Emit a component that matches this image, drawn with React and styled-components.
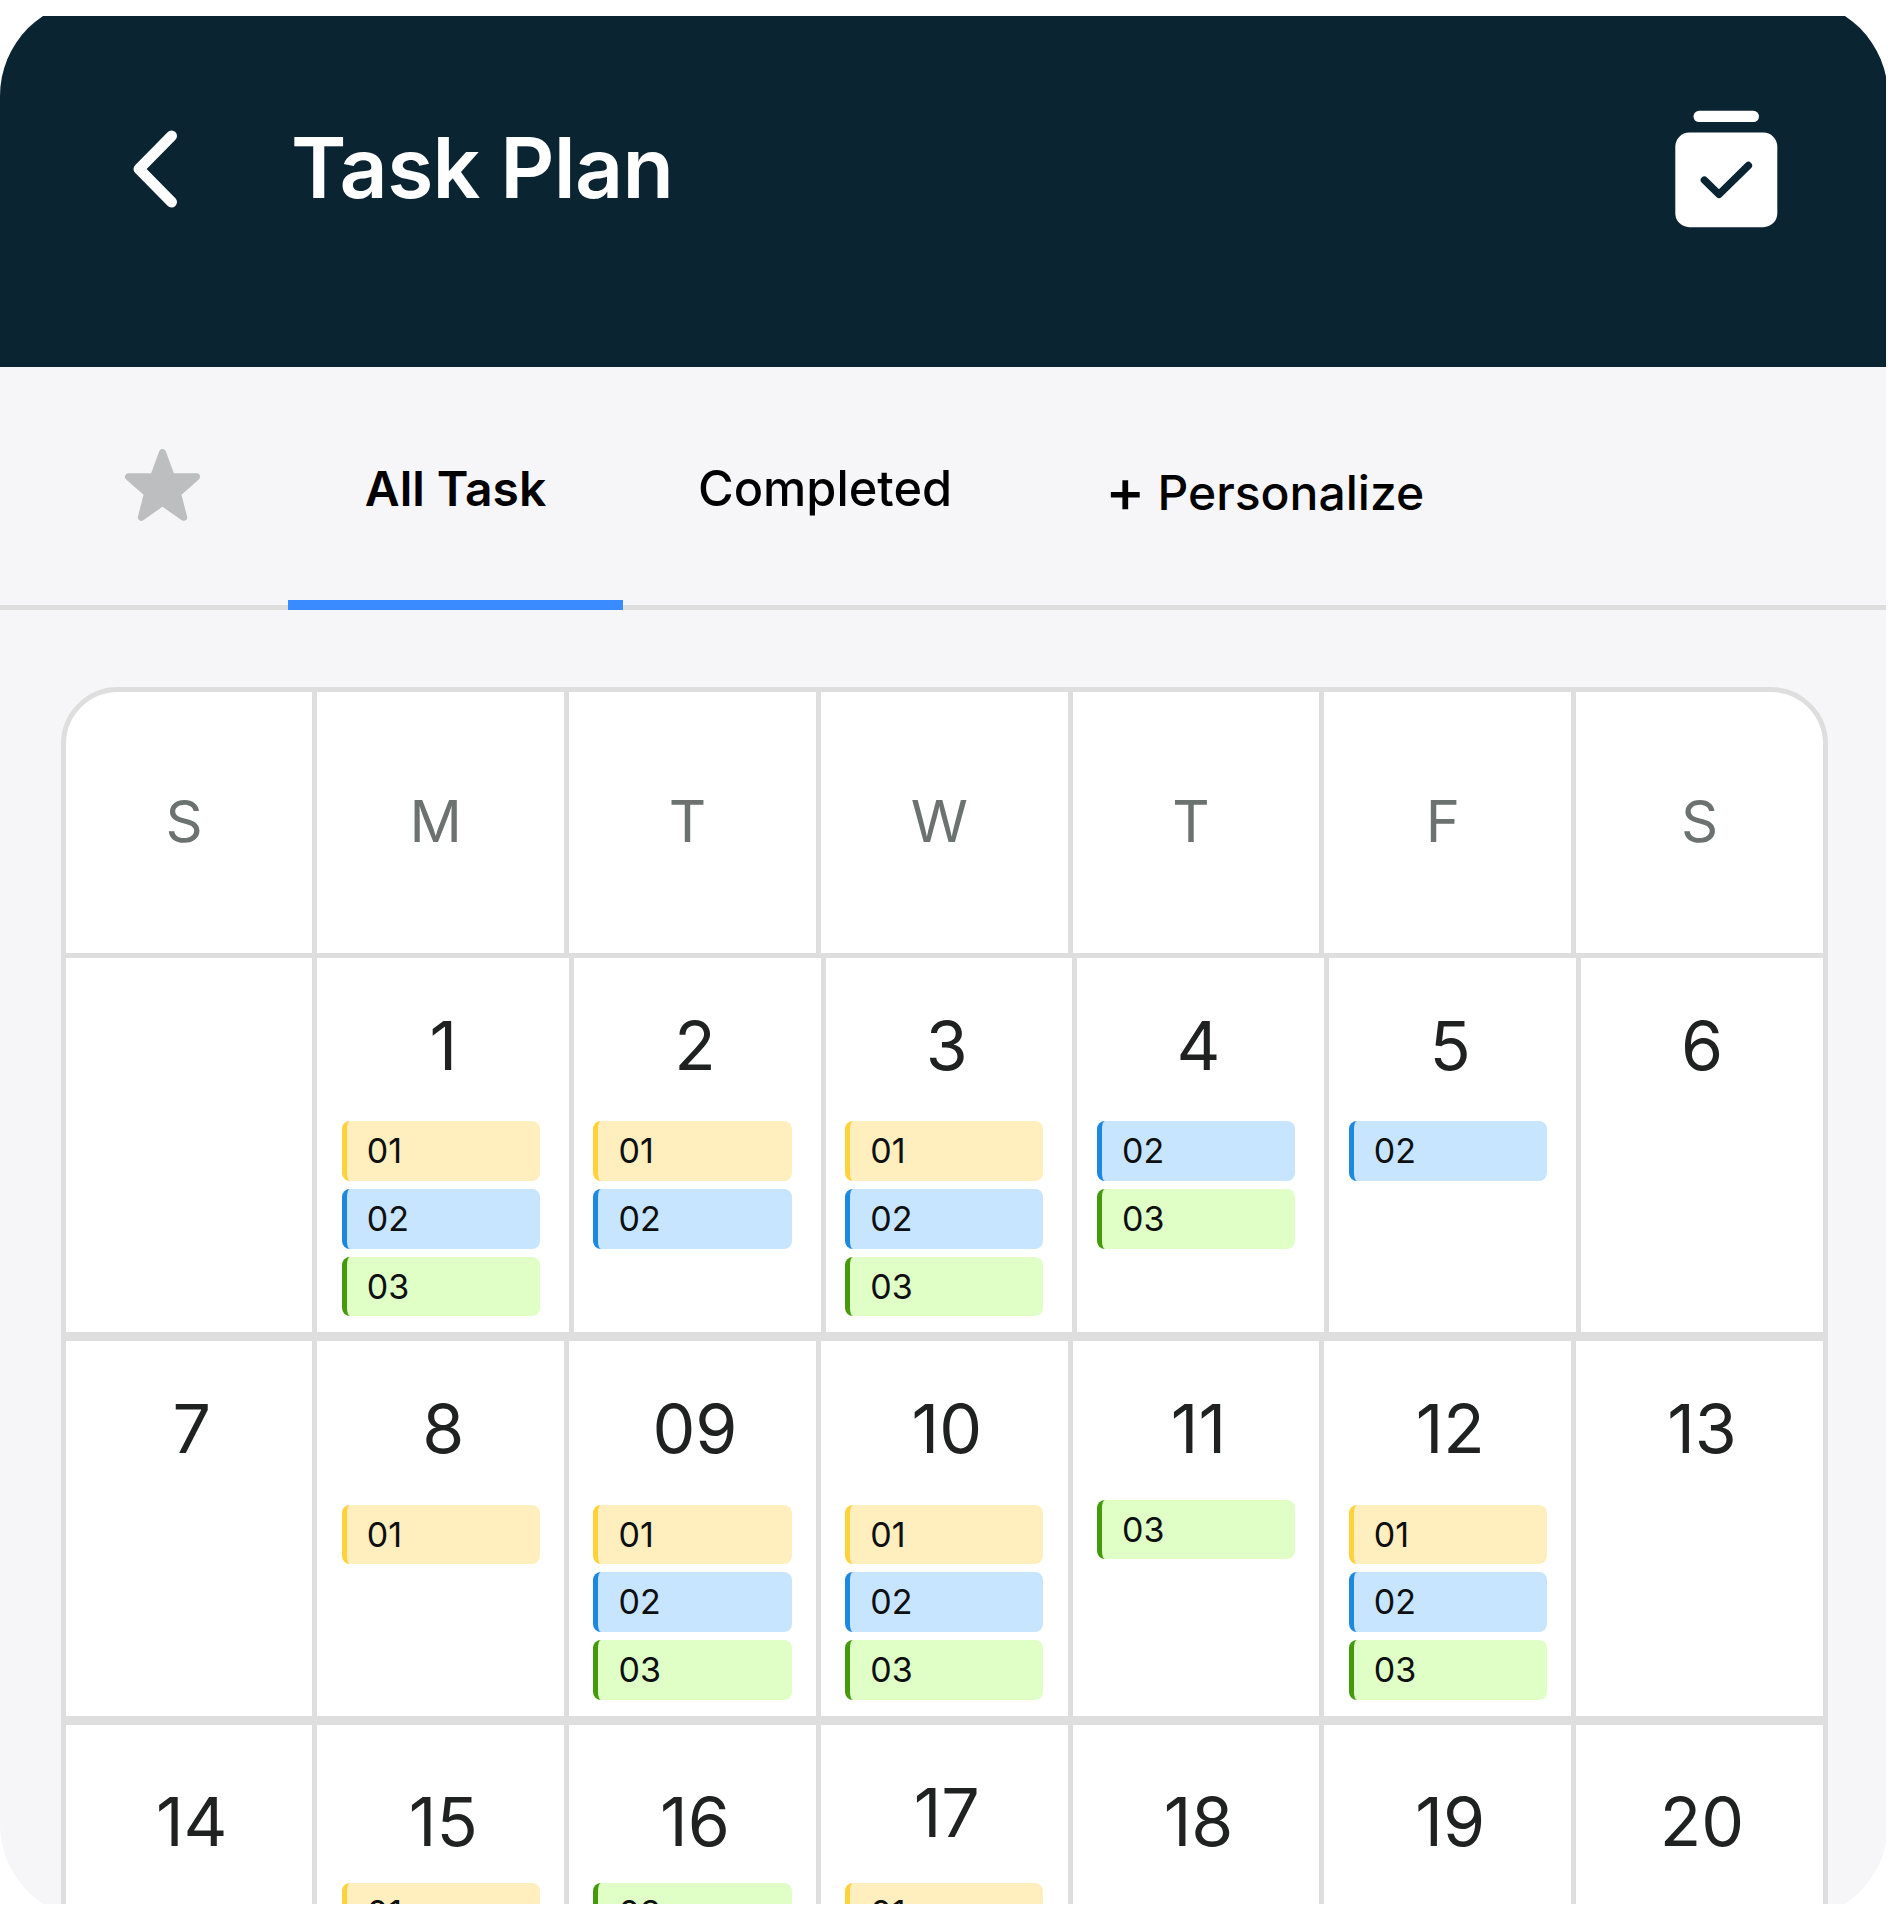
import React from "react";
import styled, { createGlobalStyle } from "styled-components";

const weekDays = ["S", "M", "T", "W", "T", "F", "S"];

const weeks = [
  {
    shiftLines: true,
    days: [
      { label: "", tasks: [] },
      { label: "1", tasks: ["01", "02", "03"] },
      { label: "2", tasks: ["01", "02"] },
      { label: "3", tasks: ["01", "02", "03"] },
      { label: "4", tasks: ["02", "03"] },
      { label: "5", tasks: ["02"] },
      { label: "6", tasks: [] },
    ],
  },
  {
    days: [
      { label: "7", tasks: [] },
      { label: "8", tasks: ["01"] },
      { label: "09", tasks: ["01", "02", "03"] },
      { label: "10", tasks: ["01", "02", "03"] },
      { label: "11", tasks: ["03"], raised: true },
      { label: "12", tasks: ["01", "02", "03"] },
      { label: "13", tasks: [] },
    ],
  },
  {
    days: [
      { label: "14", tasks: [], low: true },
      { label: "15", tasks: ["01"], low: true, raised: true },
      { label: "16", tasks: ["03"], low: true, raised: true },
      { label: "17", tasks: ["01"], raised: true },
      { label: "18", tasks: [], low: true },
      { label: "19", tasks: [], low: true },
      { label: "20", tasks: [], low: true },
    ],
  },
];

const taskColors = {
  "01": { background: "#ffeebe", accent: "#ffd13b" },
  "02": { background: "#c8e5ff", accent: "#1c88e0" },
  "03": { background: "#dfffc6", accent: "#449a0c" },
};

const BackIcon = () => (
  <svg width="46" height="80" viewBox="0 0 46 80" fill="none">
    <path
      d="M39.5 7L7 40L39.5 73"
      stroke="#fff"
      strokeWidth="11"
      strokeLinecap="round"
      strokeLinejoin="round"
    />
  </svg>
);

const TaskIcon = () => (
  <svg width="103" height="118" viewBox="0 0 103 118" fill="none">
    <rect x="18.5" y="0.8" width="65.5" height="11.3" rx="5.6" fill="#fff" />
    <rect x="0.3" y="22.6" width="102" height="94.6" rx="14" fill="#fff" />
    <path
      d="M29.4 70.2L44 84.4L73.4 55.5"
      stroke="#0b2432"
      strokeWidth="7.4"
      strokeLinecap="round"
      strokeLinejoin="round"
    />
  </svg>
);

const StarIcon = () => (
  <svg width="77" height="74" viewBox="0 0 77 74">
    <path
      d="M38.5 4.5L47.4 28.8H72.5L53.5 45.5L59.7 69.3L38.5 54.5L17.3 69.3L23.5 45.5L4.5 28.8H29.6Z"
      fill="#bcbec0"
      stroke="#bcbec0"
      strokeWidth="7"
      strokeLinejoin="round"
    />
  </svg>
);

const App = () => {
  return (
    <Screen>
      <GlobalStyle />
      <Panel>
        <Header>
          <BackIcon />
          <Title>Task Plan</Title>
          <TaskIcon />
        </Header>
        <TabBar>
          <Favorite>
            <StarIcon />
          </Favorite>
          <ActiveTab>All Task</ActiveTab>
          <Tab>Completed</Tab>
          <AddTab>
            <Plus>+</Plus> Personalize
          </AddTab>
        </TabBar>
        <Calendar>
          <WeekHeader>
            {weekDays.map((day, index) => (
              <Cell key={index} $first={index === 0}>
                <WeekDay $last={index === 6}>{day}</WeekDay>
              </Cell>
            ))}
          </WeekHeader>
          {weeks.map((week, row) => (
            <Week key={row}>
              {week.days.map((day, index) => (
                <Cell
                  key={index}
                  $first={index === 0}
                  $shift={week.shiftLines && index > 1}
                >
                  <DayNumber $low={day.low}>{day.label}</DayNumber>
                  <TaskList $raised={day.raised}>
                    {day.tasks.map((task) => (
                      <Task key={task} $colors={taskColors[task]}>
                        {task}
                      </Task>
                    ))}
                  </TaskList>
                </Cell>
              ))}
            </Week>
          ))}
        </Calendar>
      </Panel>
    </Screen>
  );
};
export default App;

const GlobalStyle = createGlobalStyle`
  * {
    box-sizing: border-box;
  }
  body {
    margin: 0;
    background-color: #fff;
    font-family: Inter, "Liberation Sans", sans-serif;
  }
`;

const Screen = styled.div`
  width: 1886px;
  height: 1888px;
  margin: 16px 0;
  overflow: hidden;
`;

const Panel = styled.div`
  width: 1888px;
  height: 1920px;
  margin-top: -16px;
  border-radius: 96px;
  overflow: hidden;
  background-color: #f6f6f9;
`;

const Header = styled.header`
  display: flex;
  align-items: center;
  height: 367px;
  padding: 0 110px 30px 132px;
  background-color: #0b2432;
  svg {
    flex-shrink: 0;
  }
`;

const Title = styled.h1`
  flex: 1;
  margin: 0 0 2px 113px;
  color: #fff;
  font-size: 84px;
  font-weight: 600;
  line-height: 84px;
  letter-spacing: -0.7px;
`;

const TabBar = styled.nav`
  display: flex;
  height: 243px;
  padding-left: 124px;
  border-bottom: 5px solid #dedede;
  color: #000;
  font-size: 48px;
  line-height: 48px;
`;

const Favorite = styled.div`
  width: 164px;
  padding-top: 81px;
`;

const Tab = styled.div`
  margin-left: 75px;
  padding-top: 98px;
  font-size: 48.7px;
  font-weight: 500;
`;

const ActiveTab = styled(Tab)`
  width: 335px;
  margin: 0 0 -5px;
  border-bottom: 10px solid #3a8bff;
  font-size: 48px;
  font-weight: 600;
  text-align: center;
`;

const AddTab = styled(Tab)`
  margin-left: 153px;
  padding-top: 102px;
  font-size: 48px;
`;

const Plus = styled.span`
  margin-right: -0.5px;
  font-size: 60px;
  line-height: 0;
  vertical-align: -1.5px;
`;

const Calendar = styled.div`
  width: 1767px;
  height: 1400px;
  margin: 77px 0 0 61px;
  overflow: hidden;
  border: 5px solid #dedede;
  border-radius: 57px;
  background-color: #fff;
`;

const WeekHeader = styled.div`
  display: grid;
  grid-template-columns: 246.4px repeat(6, 251.76px);
  height: 266px;
  border-bottom: 5px solid #dedede;
`;

const Week = styled(WeekHeader)`
  height: 383.4px;
  border-bottom-width: 9px;
`;

const Cell = styled.div`
  padding-left: ${(props) => (props.$first ? 0 : "5px")};
  background: ${(props) =>
    props.$first
      ? "none"
      : `linear-gradient(#dedede, #dedede) ${
          props.$shift ? "4.8px" : "0"
        } 0 / 5px 100% no-repeat`};
`;

const WeekDay = styled.div`
  padding-top: 100px;
  padding-right: ${(props) => (props.$last ? 0 : "10px")};
  color: #6b7270;
  font-size: 58px;
  line-height: 59px;
  text-align: center;
`;

const DayNumber = styled.div`
  height: 121px;
  padding: ${(props) => (props.$low ? "62px" : "53px")} 0 0 5px;
  color: #202222;
  font-size: 68px;
  font-kerning: none;
  line-height: 69px;
  text-align: center;
`;

const TaskList = styled.div`
  display: flex;
  flex-direction: column;
  gap: 8.1px;
  width: 198.4px;
  margin: ${(props) => (props.$raised ? "37.4px" : "42.4px")} auto 0;
`;

const Task = styled.div`
  height: 59.6px;
  padding-left: 20.2px;
  border-left: 5px solid ${(props) => props.$colors.accent};
  border-radius: 8px;
  background-color: ${(props) => props.$colors.background};
  color: #0d0f10;
  font-size: 34px;
  line-height: 60px;
`;
